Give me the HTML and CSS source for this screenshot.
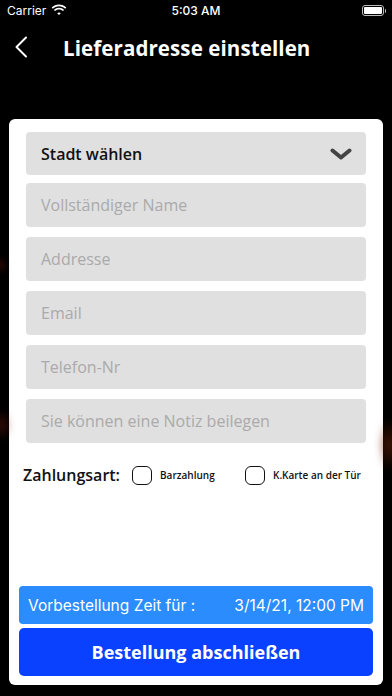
FILE: index.html
```html
<!DOCTYPE html>
<html lang="de">
<head>
<meta charset="utf-8">
<title>Lieferadresse einstellen</title>
<link rel="stylesheet" href="styles.css">
</head>
<body>
<div class="screen">
  <div class="fire fire-l1"></div>
  <div class="fire fire-l2"></div>
  <div class="fire fire-r1"></div>
  <div class="statusbar">
    <div class="sb-left">
      <span class="carrier">Carrier</span>
      <svg class="wifi" width="16" height="12" viewBox="0 0 16 12">
        <path d="M8 2.2c2.4 0 4.6.9 6.2 2.5l1.1-1.1C13.4 1.7 10.8.6 8 .6S2.6 1.7.7 3.6l1.1 1.1C3.4 3.1 5.6 2.2 8 2.2z" fill="#fff"/>
        <path d="M8 5.4c1.5 0 2.9.6 4 1.6l1.1-1.1C11.7 4.6 9.9 3.8 8 3.8s-3.7.8-5.1 2.1L4 7c1.1-1 2.5-1.6 4-1.6z" fill="#fff"/>
        <path d="M8 8.5c.7 0 1.3.3 1.8.7L8 11 6.2 9.2c.5-.4 1.1-.7 1.8-.7z" fill="#fff"/>
      </svg>
    </div>
    <span class="time">5:03 AM</span>
    <div class="battery"><div class="battery-fill"></div></div>
  </div>
  <div class="navbar">
    <svg class="back" width="14" height="22" viewBox="0 0 14 22">
      <path d="M12 1.5L2.5 11 12 20.5" fill="none" stroke="#fff" stroke-width="2" stroke-linecap="round" stroke-linejoin="round"/>
    </svg>
    <h1 class="title">Lieferadresse einstellen</h1>
  </div>
  <div class="card">
    <div class="fields">
      <div class="field select">
        <span class="select-label">Stadt wählen</span>
        <svg class="chev" width="22" height="12" viewBox="0 0 22 12">
          <path d="M2.5 2.5L11 9.5l8.5-7" fill="none" stroke="#444" stroke-width="4" stroke-linecap="round" stroke-linejoin="round"/>
        </svg>
      </div>
      <div class="field"><span class="ph">Vollständiger Name</span></div>
      <div class="field"><span class="ph">Addresse</span></div>
      <div class="field"><span class="ph">Email</span></div>
      <div class="field"><span class="ph">Telefon-Nr</span></div>
      <div class="field"><span class="ph">Sie können eine Notiz beilegen</span></div>
    </div>
    <div class="payment">
      <span class="pay-label">Zahlungsart:</span>
      <div class="opt opt-cash"><span class="box"></span><span class="opt-text">Barzahlung</span></div>
      <div class="opt"><span class="box"></span><span class="opt-text">K.Karte an der Tür</span></div>
    </div>
    <div class="spacer"></div>
    <div class="preorder">
      <span>Vorbestellung Zeit für :</span>
      <span>3/14/21, 12:00 PM</span>
    </div>
    <div class="submit">Bestellung abschließen</div>
  </div>
</div>
</body>
</html>
```
FILE: styles.css
```css
* { box-sizing: border-box; }
html, body { margin: 0; padding: 0; background: #000; }
body { font-family: "Open Sans", "Noto Sans", sans-serif; }
.screen {
  position: relative;
  width: 392px;
  height: 696px;
  overflow: hidden;
  background: #000;
  display: flex;
  flex-direction: column;
}
.fire { position: absolute; border-radius: 50%; filter: blur(3px); }
.fire-l1 { left: -8px; top: 258px; width: 16px; height: 14px; background: radial-gradient(circle, rgba(120,20,8,0.55), rgba(90,10,0,0) 70%); }
.fire-l2 { left: -10px; top: 405px; width: 20px; height: 40px; background: radial-gradient(circle, rgba(110,25,8,0.45), rgba(90,10,0,0) 70%); }
.fire-r1 { right: -8px; top: 410px; width: 20px; height: 70px; background: radial-gradient(circle, rgba(120,35,8,0.5), rgba(90,10,0,0) 70%); }

.statusbar {
  height: 20px;
  display: flex;
  align-items: center;
  justify-content: space-between;
  padding: 0 8px 0 7px;
  color: #fff;
  font-family: "Inter", "Liberation Sans", sans-serif;
  font-size: 12px;
  position: relative;
}
.sb-left { display: flex; align-items: center; gap: 5px; }
.time { position: absolute; left: 0; right: 0; text-align: center; font-weight: 500; }
.battery {
  width: 22px; height: 11px;
  border: 1px solid #bbb;
  border-radius: 3px;
  padding: 1px;
  position: relative;
}
.battery::after {
  content: ""; position: absolute; right: -3px; top: 3px; width: 1.5px; height: 4px; background: #bbb; border-radius: 0 1px 1px 0;
}
.battery-fill { width: 100%; height: 100%; background: #fff; border-radius: 1px; }

.navbar {
  height: 55px;
  display: flex;
  align-items: center;
  padding: 0 0 0 14px;
}
.back { flex: none; margin-top: -1px; }
.title {
  margin: 0 0 0 35px;
  color: #fff;
  font-size: 20.5px;
  font-weight: 700;
  letter-spacing: 0.1px;
  white-space: nowrap;
}

.card {
  margin: 44px 9px 11px;
  flex: 1;
  background: #fff;
  border-radius: 6px;
  padding: 13px 10px 9px;
  display: flex;
  flex-direction: column;
}
.fields { display: flex; flex-direction: column; gap: 10px; padding: 0 7px; }
.field {
  height: 44px;
  background: #e0e0e0;
  border-radius: 4px;
  display: flex;
  align-items: center;
  padding: 0 15px;
  font-size: 16px;
}
.select { height: 43px; justify-content: space-between; padding-right: 14px; margin-bottom: -2px; }
.select-label { color: #111; font-weight: 600; }
.ph { color: #aaaaaa; }

.payment {
  display: flex;
  align-items: center;
  margin-top: 21px;
  padding-left: 4px;
  white-space: nowrap;
}
.pay-label { font-size: 16px; font-weight: 600; color: #111; }
.opt { display: flex; align-items: center; font-size: 10px; font-weight: 600; color: #111; }
.opt-cash { margin-left: 12px; width: 113px; }
.box { flex: none; width: 20px; height: 19px; border: 1.5px solid #111; border-radius: 6px; margin-right: 8px; }
.spacer { flex: 1; }

.preorder {
  height: 38px;
  background: #2a8cfd;
  border-radius: 4px;
  display: flex;
  align-items: center;
  justify-content: space-between;
  padding: 0 9px 0 9px;
  color: #fff;
  font-family: "Inter", "Liberation Sans", sans-serif;
  font-size: 15.5px;
  white-space: nowrap;
}
.submit {
  margin-top: 4px;
  height: 48px;
  background: #0a40ff;
  border-radius: 5px;
  color: #fff;
  font-size: 18px;
  font-weight: 700;
  display: flex;
  align-items: center;
  justify-content: center;
}
```
